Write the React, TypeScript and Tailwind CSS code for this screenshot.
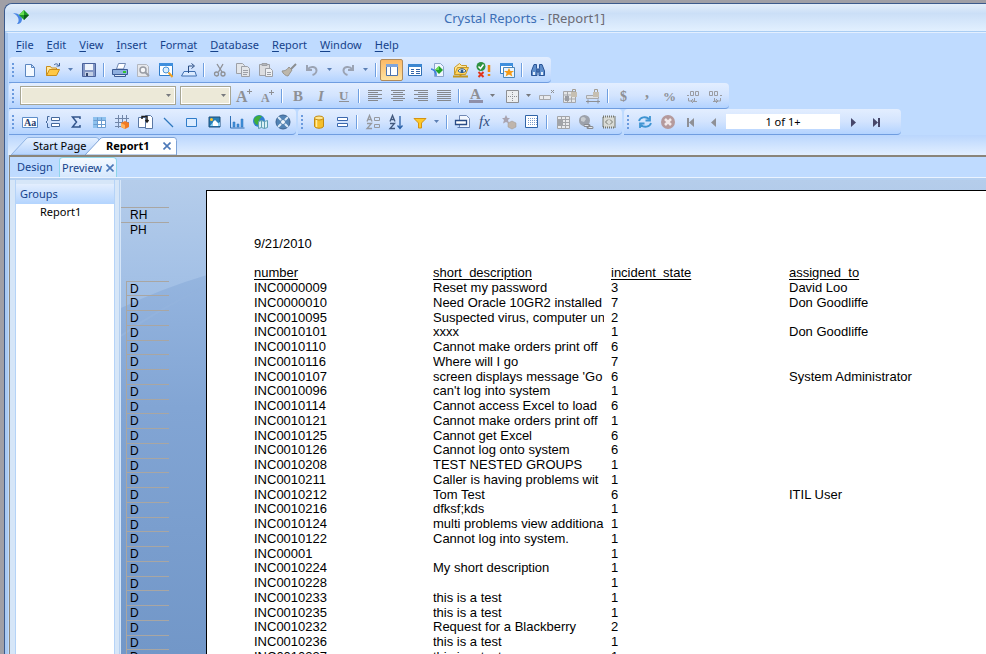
import React from "react";
import { clsx } from "clsx";

type IconName = keyof typeof icons;

const G = "#8e9095";

const icons = {
  fresh: (
    <path d="M3.5 2.5h6l3 3v9h-9z M9.5 2.5v3h3" fill="#f4f9ff" stroke="#5c87c0" />
  ),
  open: (
    <>
      <path d="M1.5 13.5v-9h4l1 1.5h5v2" fill="#ffe9a3" stroke="#c98d1a" />
      <path d="M1.5 13.5l3-6h10l-3 6z" fill="#ffc846" stroke="#c98d1a" />
      <path d="M9 3c2-2 4-1 5 1M14.500 1v3h-3" fill="none" stroke="#3c5f96" />
    </>
  ),
  save: (
    <>
      <path d="M1.5 1.500h13v13h-13z" fill="#8296c4" stroke="#4a629c" />
      <path d="M4 2h8v6H4z" fill="#eef3fb" />
      <path d="M4 10h8v4H4z" fill="#c3cfe4" />
      <path d="M5 11h2v3H5z" fill="#33466e" />
    </>
  ),
  print: (
    <>
      <path d="M4.500 7l2-5.500h7l-2 5.500z" fill="#fff" stroke="#7189b4" />
      <path d="M.5 7.500h15v5h-15z" fill="#8fb0e0" stroke="#3a5a94" />
      <path d="M2.500 12.500h11v2h-11z" fill="#dce8f8" stroke="#3a5a94" />
      <path d="M11 9h3v2h-3z" fill="#2fc42f" />
    </>
  ),
  previewDoc: (
    <>
      <path d="M2.500 2.500h9l2 2v10h-11z" fill="#e6e8ec" stroke="#b3b7bf" />
      <circle cx="8" cy="8" r="3" fill="#f6f7f9" stroke="#999da5" strokeWidth="1.500" />
      <path d="M10 10l4 4" stroke="#999da5" strokeWidth="2" />
    </>
  ),
  findWin: (
    <>
      <path d="M1.500 1.500h13v12h-13z" fill="#fff" stroke="#2f7cc9" />
      <path d="M1 1h14v3H1z" fill="#3f8fdd" />
      <circle cx="8" cy="8" r="3" fill="#d9efff" stroke="#4b92d6" />
      <path d="M10.500 10.500l4 4.500" stroke="#f0a020" strokeWidth="2" />
    </>
  ),
  exportIcon: (
    <>
      <path d="M3 9.500h11l1.500 4.500h-15z" fill="#dcebff" stroke="#3f6fb0" />
      <path d="M7.500 11v-7h5M10.500 1.500l3 2.500-3 2.500" fill="none" stroke="#2a4c82" />
    </>
  ),
  cut: (
    <g fill="none" stroke={G} strokeWidth="1.300">
      <path d="M5 2l5 8M11 2l-4.500 8" />
      <circle cx="4.500" cy="12" r="2" />
      <circle cx="11" cy="12" r="2" />
    </g>
  ),
  copy: (
    <g fill="#e3e6ea" stroke="#9da0a6">
      <path d="M1.500 1.500h6l2 2v8h-8z" />
      <path d="M6.500 4.500h6l2 2v8h-8z" />
      <path d="M8 8.500h5M8 10.500h5M8 12.500h4" />
    </g>
  ),
  paste: (
    <g fill="#dcdde0" stroke="#9da0a6">
      <path d="M1.500 2.500h10v11h-10z" />
      <path d="M4 1.500h5v2H4z" fill="#b3b5b9" />
      <path d="M7.500 6.500h5l2 2v6h-7z" fill="#eef0f3" />
      <path d="M9 10.500h4M9 12.500h4" />
    </g>
  ),
  brush: (
    <>
      <path d="M15 2l-5 5" stroke="#8b8d90" strokeWidth="2" />
      <path d="M8 5l3 3-4 6c-2 0-5-2-6-5 3 0 5-1 7-4z" fill="#bdb7ab" stroke="#98958f" />
    </>
  ),
  undo: (
    <path d="M3 3v5h5M3.500 7.500c3-4 9-3 9 1 0 2-2 4-4 4.500" fill="none" stroke="#9ba3b3" strokeWidth="2" />
  ),
  redo: (
    <path d="M13 3v5H8M12.500 7.500c-3-4-9-3-9 1 0 2 2 4 4 4.500" fill="none" stroke="#9ba3b3" strokeWidth="2" />
  ),
  panel: (
    <>
      <path d="M2.500 2.500h11v11h-11z" fill="#fff" stroke="#4d74ad" />
      <path d="M2 2h12v3H2z" fill="#7fa5dc" />
      <path d="M6.500 5v9" stroke="#4d74ad" />
    </>
  ),
  props: (
    <>
      <path d="M1.500 2.500h13v11h-13z" fill="#fff" stroke="#2f6fb5" />
      <path d="M1 2h14v3H1z" fill="#3b86d1" />
      <path d="M4 7.500h3M4 9.500h3M4 11.500h3M9 7.500h4M9 9.500h4M9 11.500h4" stroke="#3465a8" />
    </>
  ),
  crystalDoc: (
    <>
      <path d="M4.500 1.500h6l3 3v10h-9z" fill="#eef5ff" stroke="#8aa4cb" />
      <path d="M9 4l4 4-4 4-4-4z" fill="#22a12a" />
      <path d="M9 4L5 8h4z" fill="#6bdc53" />
      <path d="M1 7c4 0 6 3 5 7 0-3-2-6-5-7z" fill="#3e7ede" stroke="#3e7ede" />
    </>
  ),
  folderEye: (
    <>
      <path d="M1.500 12.500v-7l5-4 2 2h5v3" fill="#ffe79c" stroke="#c79a2b" />
      <path d="M1.500 12.500l3-7h11l-3 7z" fill="#ffd25c" stroke="#c79a2b" />
      <path d="M5 9c2-3 6-3 8 0-2 2-6 2-8 0z" fill="#fff" stroke="#2c5a8d" />
      <circle cx="9" cy="9" r="1.500" fill="#2c5a8d" />
      <path d="M0 14.500h15M7.500 12v3" stroke="#c4961c" strokeWidth="2" />
    </>
  ),
  checks: (
    <>
      <circle cx="5" cy="4.500" r="4.500" fill="#2e9140" />
      <path d="M2.500 4.500l2 2 3-4" fill="none" stroke="#fff" strokeWidth="1.500" />
      <path d="M2.500 10l5 5M7.500 10l-5 5" stroke="#e0341c" strokeWidth="2" />
      <path d="M13 3v7M13 12v2" stroke="#ed8b12" strokeWidth="2.500" />
    </>
  ),
  starWin: (
    <>
      <path d="M1.500 1.500h12v10h-12z" fill="#fff" stroke="#2f7cc9" />
      <path d="M1 1h13v3H1z" fill="#3f8fdd" />
      <path d="M4.500 5.500h11v10h-11z" fill="#e9f5ff" stroke="#4d86b9" />
      <path d="M10 6l1.400 3H15l-2.600 2 1 3.500L10 12.500 6.600 14.500l1-3.500L5 9h3.600z" fill="#f59a16" />
    </>
  ),
  binoculars: (
    <g fill="#5f8ecb" stroke="#2a5496">
      <path d="M4 2.500h2.500v4l.5 1v6H1.500V9z" />
      <path d="M12 2.500H9.500v4l-.5 1v6h5.500V9z" />
      <path d="M7 7h2v3H7z" />
      <path d="M3 10h2v3H3zM11 10h2v3h-2z" fill="#e2eefc" stroke="none" />
    </g>
  ),
  growA: (
    <g fill={G}>
      <text x="0" y="14" fontSize="16" fontWeight="bold" fontFamily="Liberation Serif">A</text>
      <path d="M11 3h2V1h1v2h2v1h-2v2h-1V4h-2z" />
    </g>
  ),
  shrinkA: (
    <g fill={G}>
      <text x="2" y="14" fontSize="12" fontWeight="bold" fontFamily="Liberation Serif">A</text>
      <path d="M10 4h2V2h1v2h2v1h-2v2h-1V5h-2z" />
    </g>
  ),
  bold: <text x="3" y="13" fontSize="15" fontWeight="bold" fontFamily="Liberation Serif" fill={G}>B</text>,
  italic: <text x="5" y="13" fontSize="15" fontWeight="bold" fontStyle="italic" fontFamily="Liberation Serif" fill={G}>I</text>,
  underline: (
    <g fill={G}>
      <text x="3" y="12" fontSize="13" fontWeight="bold" fontFamily="Liberation Serif">U</text>
      <path d="M3 13h10v1H3z" />
    </g>
  ),
  alignL: <path d="M1 2.500h14M1 4.500h10M1 6.500h14M1 8.500h10M1 10.500h14M1 12.500h10" stroke="#85888e" />,
  alignC: <path d="M1 2.500h14M3 4.500h10M1 6.500h14M3 8.500h10M1 10.500h14M3 12.500h10" stroke="#85888e" />,
  alignR: <path d="M1 2.500h14M5 4.500h10M1 6.500h14M5 8.500h10M1 10.500h14M5 12.500h10" stroke="#85888e" />,
  alignJ: <path d="M1 2.500h14M1 4.500h14M1 6.500h14M1 8.500h14M1 10.500h14M1 12.500h14" stroke="#85888e" />,
  fontColor: (
    <g fill={G}>
      <text x="3" y="11" fontSize="15" fontWeight="bold" fontFamily="Liberation Serif">A</text>
      <path d="M2 12h14v3H2z" fill="#8f8fa8" />
    </g>
  ),
  border: (
    <>
      <path d="M3.500 2.500h12v12h-12z" fill="#eceef0" stroke="#8d8f93" />
      <path d="M9.500 4v10M5 8.500h10" stroke="#8d8f93" strokeDasharray="1 1" />
    </>
  ),
  suppress: (
    <>
      <path d="M.5 7.500h11v4H.5zM4.500 7.500v4" fill="#e8eaee" stroke="#a7a9ad" />
      <path d="M12 2l3 3M15 2l-3 3" stroke="#8d8f93" />
    </>
  ),
  lockFmt: (
    <>
      <path d="M1.500 3.500h12v11h-12zM1.500 7h12M1.500 11h12M5.500 3.500v11M9.500 3.500v11" fill="#e4e6e8" stroke="#a5a7ab" />
      <path d="M9 4h6v5H9z" fill="#c6bfb2" />
      <path d="M10.500 4V1.500h3V4" fill="none" stroke="#a39d92" />
      <path d="M3 8h4v5H3z" fill="#9a9da3" />
    </>
  ),
  lockSize: (
    <>
      <path d="M1.500 7.500h12v3h-12z" fill="#dcdfe4" stroke="#a7a9ad" />
      <path d="M8 4h6v5H8z" fill="#c6bfb2" />
      <path d="M9.500 4V1.500h3V4" fill="none" stroke="#a39d92" />
      <path d="M1 13.500h14M3 11.500v4M13 11.500v4" stroke="#8d8f93" />
    </>
  ),
  dollar: <text x="4" y="13" fontSize="14" fontWeight="bold" fontFamily="Liberation Serif" fill={G}>$</text>,
  comma: <text x="6" y="10" fontSize="16" fontWeight="bold" fontFamily="Liberation Serif" fill={G}>,</text>,
  percent: <text x="1" y="13" fontSize="13" fontWeight="bold" fontFamily="Liberation Serif" fill={G}>%</text>,
  decAdd: (
    <g fill="none" stroke="#9a9ca2">
      <path d="M2 7.500h2M5.500 3.500h3v4h-3zM10.500 3.500h3v4h-3zM3.500 10v3h6v-3M12 13.500h-4M8 11l-2 2 2 2" />
    </g>
  ),
  decDel: (
    <g fill="none" stroke="#9a9ca2">
      <path d="M1.500 3.500h3v4h-3zM6.500 3.500h3v4h-3zM12 7.500h2M6.500 10v3h6v-3M5 13.500h4M8 11l2 2-2 2" />
    </g>
  ),
  textObj: (
    <>
      <path d="M.5 3.500h15v10H.5z" fill="#fff" stroke="#5d8dc8" />
      <text x="2" y="12" fontSize="10" fontWeight="bold" fontFamily="Liberation Serif" fill="#27406f">Aa</text>
    </>
  ),
  group: (
    <>
      <path d="M6.500 3.500h8v3h-8zM6.500 9.500h8v3h-8z" fill="#fff" stroke="#44689c" />
      <path d="M4.500 2.500h-2v4L1 8l1.500 1.500v4h2" fill="none" stroke="#44689c" />
    </>
  ),
  sigma: <path d="M12 5V3H4.500l4 5-4 5H12v-2" fill="none" stroke="#33558c" strokeWidth="1.500" />,
  crossTab: (
    <>
      <path d="M2.500 3.500h12v10h-12z" fill="#fff" stroke="#6c9ccf" />
      <path d="M2 3h13v3H2zM2 3h4v11H2z" fill="#8dc1ee" />
      <path d="M6.500 3.500v10M10.500 3.500v10M2.500 6.500h12M2.500 10.500h12" stroke="#6c9ccf" />
    </>
  ),
  olap: (
    <>
      <path d="M4.500 1v13M8.500 1v13M12.500 1v9M1 4.500h14M1 8.500h14M1 12.500h8" stroke="#7186a8" />
      <path d="M7 9l4-2 4 2v4l-4 2-4-2z" fill="#f07a23" />
      <path d="M7 9l4 2v4l-4-2z" fill="#ffb25c" />
    </>
  ),
  subreport: (
    <>
      <path d="M1.500 3.500h7v10h-7zM8.500 1.500h5l2 2v11h-7z" fill="#fff" stroke="#5a78a5" />
      <path d="M5 5V2.500h5V5M10 4v3M8.500 6L10 8l1.500-2" fill="none" stroke="#1f1f1f" strokeWidth="1.500" />
    </>
  ),
  line: <path d="M4 4l9 9" stroke="#2d77bd" strokeWidth="1.200" />,
  box: <path d="M3.500 4.500h10v8h-10z" fill="#dcecff" stroke="#2f7cc9" />,
  picture: (
    <>
      <path d="M3 3h11v10H3z" fill="#2a7fb5" stroke="#1d4f7c" />
      <path d="M4 12l4-5 3 3 3-2v4z" fill="#8fd4f5" />
      <path d="M7 8l2-2 3 3v3H7z" fill="#fff" />
      <circle cx="5.500" cy="5.500" r="1.500" fill="#ffc62e" />
    </>
  ),
  chart: (
    <>
      <path d="M1.500 2v12h14" fill="none" stroke="#2e6fb5" />
      <path d="M4 8h2v5H4zM8 10h2v3H8zM12 5h2v8h-2z" fill="#3f92dd" stroke="#2e6fb5" strokeWidth=".5" />
    </>
  ),
  map: (
    <>
      <circle cx="7" cy="7" r="6" fill="#2f7fd0" />
      <path d="M2 5c2-4 6-4 8-3l-3 4 1 3-3 2c-2-1-3-3-3-6z" fill="#3fae3c" />
      <path d="M6.500 7.500l3-1 3 1 3-1v7l-3 1-3-1-3 1zM9.500 6.500v7M12.500 7.500v7" fill="#d9f0f4" stroke="#5d9db2" />
    </>
  ),
  flash: (
    <>
      <circle cx="8" cy="8" r="7" fill="#5283b4" stroke="#39618f" />
      <path d="M3 3l10 10M13 3L3 13" stroke="#dcebf8" strokeWidth="2" />
      <circle cx="8" cy="8" r="2.500" fill="#f2f8fd" stroke="#4d7cab" />
    </>
  ),
  database: (
    <>
      <path d="M3.500 4v8c0 3 9 3 9 0V4z" fill="#f5bf2b" stroke="#c18a12" />
      <ellipse cx="8" cy="4" rx="4.500" ry="2" fill="#ffe68f" stroke="#c18a12" />
      <path d="M5.500 6v7" stroke="#ffec9f" strokeWidth="1.500" />
    </>
  ),
  sections: <path d="M3.500 3.500h10v3h-10zM3.500 9.500h10v3h-10z" fill="#fff" stroke="#3b68ad" />,
  sortGroup: (
    <g fill="none" stroke="#96999f">
      <path d="M2 7.500l2.500-6 2.500 6M3 5.500h3M2 9.500h4.500l-4.500 5h5" strokeWidth="1.300" />
      <path d="M9.500 3.500h5v3h-5zM9.500 10.500h5v3h-5z" />
    </g>
  ),
  sortRec: (
    <g fill="none">
      <path d="M2 7.500l2.500-6 2.500 6M3 5.500h3M2 9.500h4.500l-4.500 5h5" stroke="#41587d" strokeWidth="1.300" />
      <path d="M12 2v12M9.500 11.500l2.500 3 2.500-3" stroke="#2b61a8" strokeWidth="1.300" />
    </g>
  ),
  filter: <path d="M3 4.500h12L10.500 9v5h-3V9z" fill="#ffc928" stroke="#d39312" />,
  printDoc: (
    <>
      <path d="M4.500 1.500h7l3 3v9h-10z" fill="#f2f7ff" stroke="#7189b4" />
      <path d="M.5 6.500h11v4H.5z" fill="#fff" stroke="#2a4c86" strokeWidth="1.300" />
      <path d="M2.500 13.500h12" stroke="#5a7ab0" />
    </>
  ),
  fx: <text x="1" y="12" fontSize="15" fontStyle="italic" fontFamily="Liberation Serif" fill="#324f82">fx</text>,
  cubeStar: (
    <>
      <path d="M5 1l1.500 3H9L7 6l1 3.500L5 8 2 9.500 3 6 1 4h2.500z" fill="#a9a4b0" />
      <path d="M7 9l4-2 4 2v4l-4 2-4-2z" fill="#bfb5ac" stroke="#9d958d" strokeWidth=".5" />
    </>
  ),
  dots: (
    <>
      <path d="M1.500 1.500h12v12h-12z" fill="#fff" stroke="#2f64a8" />
      <path d="M4 4.500h9M4 6.500h9M4 8.500h9M4 10.500h9" stroke="#7a9ccb" strokeDasharray="1 1" />
    </>
  ),
  gridA: (
    <>
      <path d="M2.500 2.500h12v12h-12zM2.500 5.500h12M2.500 8.500h12M2.500 11.500h12M6.500 2.500v12M10.500 2.500v12" fill="#e9eaec" stroke="#a3a5a9" />
      <path d="M3 6h5v5H3z" fill="#a2a4a8" />
    </>
  ),
  globeLink: (
    <>
      <circle cx="6.500" cy="6.500" r="5.500" fill="#9da2ab" />
      <path d="M3 4c2-2 4-1 5 1l-2 3-3-1z" fill="#c8ccd0" />
      <path d="M7 11.500h4M10 13.500h4" stroke="#87898e" strokeWidth="3" strokeLinecap="round" />
      <path d="M7 11.500h3M11 13.500h3" stroke="#e4e6e8" strokeLinecap="round" />
    </>
  ),
  codeGrid: (
    <>
      <path d="M2 2.500h12v11H2z" fill="#d9dbd6" stroke="#77796f" strokeDasharray="1 1" strokeWidth="2" />
      <path d="M7 5.500L4.500 8 7 10.500M9 5.500L11.500 8 9 10.500" fill="none" stroke="#77796f" />
    </>
  ),
  refresh: (
    <g fill="none" stroke="#3f94d2" strokeWidth="1.800">
      <path d="M2 7c1-4 7-5 10-2M13 2v4.500H8.500" />
      <path d="M14 9c-1 4-7 5-10 2M3 14V9.500h4.500" />
    </g>
  ),
  stop: (
    <>
      <circle cx="8" cy="8" r="7" fill="#b59a9c" />
      <path d="M5 5l6 6M11 5l-6 6" stroke="#efe8ea" strokeWidth="2.500" />
    </>
  ),
  first: <path d="M4 4h2v9H4zM11 4v9L6 8.500z" fill="#8f9096" />,
  prev: <path d="M10 4v9L5 8.500z" fill="#8f9096" />,
  next: <path d="M6 4v9l5-4.500z" fill="#47476a" />,
  last: <path d="M5 4v9l5-4.500zM10 4h2v9h-2z" fill="#47476a" />,
};

type ToolItem = { icon: IconName; label: string; on?: boolean } | "sep" | "drop" | "dropOff";

const t = (icon: IconName, label: string, on = false): ToolItem => ({ icon, label, on });

const standardTools: ToolItem[] = [
  t("fresh", "New"), t("open", "Open"), "drop", t("save", "Save"), "sep",
  t("print", "Print"), t("previewDoc", "Print Preview"), t("findWin", "HTML Preview"), t("exportIcon", "Export"), "sep",
  t("cut", "Cut"), t("copy", "Copy"), t("paste", "Paste"), t("brush", "Format Painter"),
  t("undo", "Undo"), "drop", t("redo", "Redo"), "drop", "sep",
  t("panel", "Toggle Preview Panel", true), t("props", "Field Explorer"), t("crystalDoc", "Report Explorer"),
  t("folderEye", "Repository Explorer"), t("checks", "Dependency Checker"), t("starWin", "Workbench"), "sep",
  t("binoculars", "Find"),
];

const formatTools: ToolItem[] = [
  t("growA", "Increase Font Size"), t("shrinkA", "Decrease Font Size"), "sep",
  t("bold", "Bold"), t("italic", "Italic"), t("underline", "Underline"), "sep",
  t("alignL", "Align Left"), t("alignC", "Align Center"), t("alignR", "Align Right"), t("alignJ", "Justify"), "sep",
  t("fontColor", "Font Color"), "dropOff", t("border", "Borders"), "dropOff",
  t("suppress", "Suppress"), t("lockFmt", "Lock Format"), t("lockSize", "Lock Size"), "sep",
  t("dollar", "Currency"), t("comma", "Thousands"), t("percent", "Percent"),
  t("decAdd", "Increase Decimals"), t("decDel", "Decrease Decimals"),
];

const insertTools: ToolItem[] = [
  t("textObj", "Text Object"), t("group", "Group"), t("sigma", "Summary"), t("crossTab", "Cross-Tab"),
  t("olap", "OLAP Grid"), t("subreport", "Subreport"), t("line", "Line"), t("box", "Box"),
  t("picture", "Picture"), t("chart", "Chart"), t("map", "Map"), t("flash", "Flash Object"),
];

const expertTools: ToolItem[] = [
  t("database", "Database Expert"), t("sections", "Group Expert"), "sep",
  t("sortGroup", "Group Sort"), t("sortRec", "Record Sort"), t("filter", "Select Expert"), "drop", "sep",
  t("printDoc", "Section Expert"), t("fx", "Formula Workshop"), t("cubeStar", "OLAP Design"), t("dots", "Template Expert"), "sep",
  t("gridA", "Format"), t("globeLink", "Hyperlink"), t("codeGrid", "Highlighting"),
];

function Icon({ name }: { name: IconName }) {
  return (
    <svg viewBox="0 0 16 16" className="size-4 shrink-0 overflow-visible" aria-hidden="true">
      {icons[name]}
    </svg>
  );
}

function Tools({ items }: { items: ToolItem[] }) {
  return (
    <>
      {items.map((it, i) => {
        if (it === "sep")
          return (
            <span key={i} className="flex w-2 shrink-0 justify-center">
              <span className="h-3.5 w-0.5 border-l border-[#6f9fe0] bg-white" />
            </span>
          );
        if (it === "drop" || it === "dropOff")
          return (
            <button key={i} aria-label="More" className="flex h-[22px] w-[13px] shrink-0 items-center justify-center">
              <svg viewBox="0 0 5 3" className="h-[3px] w-[5px]" aria-hidden="true">
                <path d="M0 0h5L2.500 3z" fill={it === "drop" ? "#5b7fb4" : "#77797e"} />
              </svg>
            </button>
          );
        return (
          <button
            key={i}
            aria-label={it.label}
            className={clsx(
              "flex h-[22px] w-[23px] shrink-0 items-center justify-center",
              it.on && "rounded-xs border border-[#b08a5a] bg-linear-to-b from-[#fdb965] to-[#fee3a0]",
            )}
          >
            <Icon name={it.icon} />
          </button>
        );
      })}
    </>
  );
}

function Bar({ children, label }: { children: React.ReactNode; label: string }) {
  return (
    <div
      role="toolbar"
      aria-label={label}
      className="flex h-[26px] shrink-0 items-center rounded-r-sm rounded-tl-sm border-b border-[#6f9de0] bg-linear-to-b from-[#e3eeff] via-[#d3e4fe] to-[#b3d3ff] pr-0.5"
    >
      <span className="mx-[3px] flex w-[3px] flex-col gap-0.5">
        {[0, 1, 2, 3].map((n) => (
          <span key={n} className="size-0.5 bg-[#6a9ade]" />
        ))}
      </span>
      {children}
    </div>
  );
}

function Combo({ width, label }: { width: string; label: string }) {
  return (
    <label className={clsx("relative flex h-[19px] shrink-0 border border-[#a7a693] bg-[#ece9d8] outline-1 -outline-offset-2 outline-white", width)}>
      <select aria-label={label} disabled className="w-full appearance-none bg-transparent">
        <option></option>
      </select>
      <svg viewBox="0 0 5 3" className="pointer-events-none absolute top-[7px] right-1 h-[3px] w-[5px]" aria-hidden="true">
        <path d="M0 0h5L2.500 3z" fill="#77797e" />
      </svg>
    </label>
  );
}

const menus: [string, string, string][] = [
  ["", "F", "ile"], ["", "E", "dit"], ["", "V", "iew"], ["", "I", "nsert"], ["Form", "a", "t"],
  ["", "D", "atabase"], ["", "R", "eport"], ["", "W", "indow"], ["", "H", "elp"],
];

const rows: [string, string, string, string][] = [
  ["INC0000009", "Reset my password", "3", "David Loo"],
  ["INC0000010", "Need Oracle 10GR2 installed", "7", "Don Goodliffe"],
  ["INC0010095", "Suspected virus, computer un", "2", ""],
  ["INC0010101", "xxxx", "1", "Don Goodliffe"],
  ["INC0010110", "Cannot make orders print off", "6", ""],
  ["INC0010116", "Where will I go", "7", ""],
  ["INC0010107", "screen displays message 'Go", "6", "System Administrator"],
  ["INC0010096", "can't log into system", "1", ""],
  ["INC0010114", "Cannot access Excel to load", "6", ""],
  ["INC0010121", "Cannot make orders print off", "1", ""],
  ["INC0010125", "Cannot get Excel", "6", ""],
  ["INC0010126", "Cannot log onto system", "6", ""],
  ["INC0010208", "TEST NESTED GROUPS", "1", ""],
  ["INC0010211", "Caller is having problems wit", "1", ""],
  ["INC0010212", "Tom Test", "6", "ITIL User"],
  ["INC0010216", "dfksf;kds", "1", ""],
  ["INC0010124", "multi problems view additiona", "1", ""],
  ["INC0010122", "Cannot log into system.", "1", ""],
  ["INC00001", "", "1", ""],
  ["INC0010224", "My short description", "1", ""],
  ["INC0010228", "", "1", ""],
  ["INC0010233", "this is a test", "1", ""],
  ["INC0010235", "this is a test", "1", ""],
  ["INC0010232", "Request for a Blackberry", "2", ""],
  ["INC0010236", "this is a test", "1", ""],
  ["INC0010237", "this is a test", "1", ""],
];

const columns = ["number", "short_description", "incident_state", "assigned_to"];

function CloseMark() {
  return (
    <svg viewBox="0 0 8 8" className="size-2" aria-hidden="true">
      <path d="M.5.500l7 7M7.500.500l-7 7" stroke="#4b78b8" strokeWidth="1.600" />
    </svg>
  );
}

export default function App() {
  return (
    <div className="h-screen overflow-hidden bg-[#a09fa6] pt-[3px] pl-1 font-['Noto_Sans','Open_Sans',sans-serif] text-[11px] leading-[14px] text-black">
      <div className="flex h-full flex-col rounded-tl-lg border-t border-l border-[#3c5a8c] bg-[#bfdbff]">
        <header className="flex h-7 shrink-0 items-center rounded-tl-lg border-b border-[#a9cdf3] bg-linear-to-b from-[#e4eefa] via-[#cbdff7] via-35% to-[#e2f0ff] pl-2">
          <svg viewBox="0 0 18 16" className="h-4 w-[18px]" aria-hidden="true">
            <path d="M0 3c5 0 9 3 9 6 0 3-2 5-5 5 3-3 2-8-4-11z" fill="#4a86e4" />
            <path d="M11 0l5 5-5 5-5-5z" fill="#1c9a27" />
            <path d="M11 0L6 5h5z" fill="#66de4e" />
            <path d="M11 5h5l-5 5z" fill="#0c5c18" />
          </svg>
          <h1 className="flex-1 pl-8 text-center text-[13px] leading-4 text-[#3d6fb6]">
            Crystal Reports - <span className="text-[#6b6b74]">[Report1]</span>
          </h1>
        </header>

        <div className="flex min-h-0 flex-1 flex-col border-t border-l-[3px] border-t-[#e3efff] border-l-[#a9c9f2]">
          <nav className="flex h-6 shrink-0 items-center gap-[13px] pl-2 text-[#15428b]">
            {menus.map(([a, b, c]) => (
              <button key={b + c} className="whitespace-nowrap">
                {a}
                <span className="underline underline-offset-2">{b}</span>
                {c}
              </button>
            ))}
          </nav>

          <div className="ml-px flex shrink-0 flex-col items-start">
            <Bar label="Standard"><Tools items={standardTools} /></Bar>
            <Bar label="Formatting">
              <Combo width="ml-0.5 w-[156px]" label="Font" />
              <Combo width="ml-1 mr-px w-[51px]" label="Font Size" />
              <Tools items={formatTools} />
            </Bar>
            <div className="flex gap-0.5">
              <Bar label="Insert"><Tools items={insertTools} /></Bar>
              <Bar label="Experts"><Tools items={expertTools} /></Bar>
              <Bar label="Navigation">
                <Tools items={[t("refresh", "Refresh"), t("stop", "Stop"), t("first", "First Page"), t("prev", "Previous Page")]} />
                <input
                  aria-label="Page"
                  readOnly
                  defaultValue="1 of 1+"
                  className="mx-px h-[15px] w-[114px] bg-white text-center"
                />
                <Tools items={[t("next", "Next Page"), t("last", "Last Page")]} />
                <span className="w-3" />
              </Bar>
            </div>
          </div>

          <div className="flex h-5 shrink-0 items-end bg-linear-to-b from-[#bad6fd] to-[#e2efff] pl-[3px]">
            <button className="relative h-[18px] w-[88px] pl-[22px] text-left whitespace-nowrap">
              <svg viewBox="0 0 88 18" className="absolute inset-0 h-full w-full" aria-hidden="true">
                <defs>
                  <linearGradient id="tab" x2="0" y2="1">
                    <stop stopColor="#e6f1ff" />
                    <stop offset="1" stopColor="#b5d3fd" />
                  </linearGradient>
                </defs>
                <path d="M0 18L15 2q1-1.500 3-1.500h67q3 0 3 3V18z" fill="url(#tab)" stroke="#8fb3e3" />
              </svg>
              <span className="relative">Start Page</span>
            </button>
            <button className="relative -ml-3.5 flex h-[18px] w-[92px] items-center justify-between pr-1.5 pl-[21px] font-bold">
              <svg viewBox="0 0 92 18" className="absolute inset-0 h-full w-full" aria-hidden="true">
                <path d="M0 18L15 2q1-1.500 3-1.500h71q2.500 0 2.500 3V18z" fill="#fff" stroke="#7fa3d6" />
              </svg>
              <span className="relative">Report1</span>
              <span className="relative"><CloseMark /></span>
            </button>
          </div>

          <div className="ml-px flex min-h-0 flex-1 flex-col border-t-2 border-l border-[#8a857a]">
            <div className="flex h-[21px] shrink-0 items-end border-b border-[#eaf3ff]">
              <button className="h-5 w-[49px] pl-[7px] text-left text-[#15428b]">Design</button>
              <button className="flex h-5 items-center gap-1 rounded-t-sm border border-b-0 border-[#8ed6ea] bg-linear-to-b from-[#f4f9ff] to-[#d6e8fd] px-0.5 text-[#15428b]">
                Preview <CloseMark />
              </button>
            </div>

            <div className="flex min-h-0 flex-1 border-t-2 border-[#b5d0f0] bg-[#d6e6f8]">
              <aside className="ml-[5px] w-[100px] shrink-0 border-x border-[#b5d3f7] bg-white">
                <div className="h-1 bg-[#d6e6f8]" />
                <h2 className="h-5 bg-linear-to-b from-[#e3eefe] to-[#b3d4fe] pl-1 leading-5 text-[#15428b]">Groups</h2>
                <p className="pt-px pl-6">Report1</p>
              </aside>
              <div className="mr-px w-[5px] shrink-0 border-r border-[#b5d0f0]" />

              <main className="relative flex min-w-0 flex-1 bg-linear-to-b from-[#b5cdeb] via-[#a4c1e6] via-20% to-[#749acb]">
                <svg viewBox="0 0 86 474" preserveAspectRatio="xMinYMin slice" className="absolute inset-y-0 left-0 h-full w-[86px]" aria-hidden="true">
                  <defs>
                    <linearGradient id="deep" x2="0" y2="1">
                      <stop stopColor="#95b5df" />
                      <stop offset=".35" stopColor="#82a5d4" />
                      <stop offset="1" stopColor="#7297c8" />
                    </linearGradient>
                  </defs>
                  <path d="M0 128Q42 108 86 95V474H0z" fill="url(#deep)" />
                  <path d="M0 156Q40 128 86 106" fill="none" stroke="#93b3dd" strokeWidth="2" />
                </svg>
                <div className="relative w-[85px] shrink-0 pt-[27px] font-['Liberation_Sans',sans-serif] text-[12px] leading-[15px]">
                  <div className="h-[15px] w-12 border-t border-[#a9a6a2] pl-[9px]">RH</div>
                  <div className="h-[15px] w-12 border-t border-[#a9a6a2] pl-[9px]">PH</div>
                  <ul className="mt-11 ml-[5px] w-[43px] border-l border-[#a9a6a2]">
                    {rows.map((r) => (
                      <li key={r[0]} className="h-[15px] border-t border-[#a9a6a2] pl-[3px] nth-[4n+1]:h-3.5">D</li>
                    ))}
                  </ul>
                </div>

                <article className="relative mt-2.5 min-w-0 flex-1 overflow-hidden border-t border-l border-black bg-white pt-[45px] pl-[47px] font-['Liberation_Sans',Arial,sans-serif] text-[13px] leading-[15px]">
                  <p>9/21/2010</p>
                  <table className="mt-[15px] w-full table-fixed border-collapse text-left">
                    <colgroup>
                      <col className="w-[179px]" />
                      <col className="w-[178px]" />
                      <col className="w-[178px]" />
                      <col />
                    </colgroup>
                    <thead>
                      <tr className="h-3.5">
                        {columns.map((c) => (
                          <th key={c} className="p-0 font-normal leading-[14px] underline underline-offset-2">{c}</th>
                        ))}
                      </tr>
                    </thead>
                    <tbody>
                      {rows.map((r) => (
                        <tr key={r[0]} className="h-[15px] leading-[15px] nth-[4n]:h-3.5 nth-[4n]:leading-[14px]">
                          <td className="p-0">{r[0]}</td>
                          <td className="p-0"><div className="w-[171px] overflow-hidden whitespace-nowrap">{r[1]}</div></td>
                          <td className="p-0">{r[2]}</td>
                          <td className="p-0 whitespace-nowrap">{r[3]}</td>
                        </tr>
                      ))}
                    </tbody>
                  </table>
                </article>
              </main>
            </div>
          </div>
        </div>
      </div>
    </div>
  );
}
